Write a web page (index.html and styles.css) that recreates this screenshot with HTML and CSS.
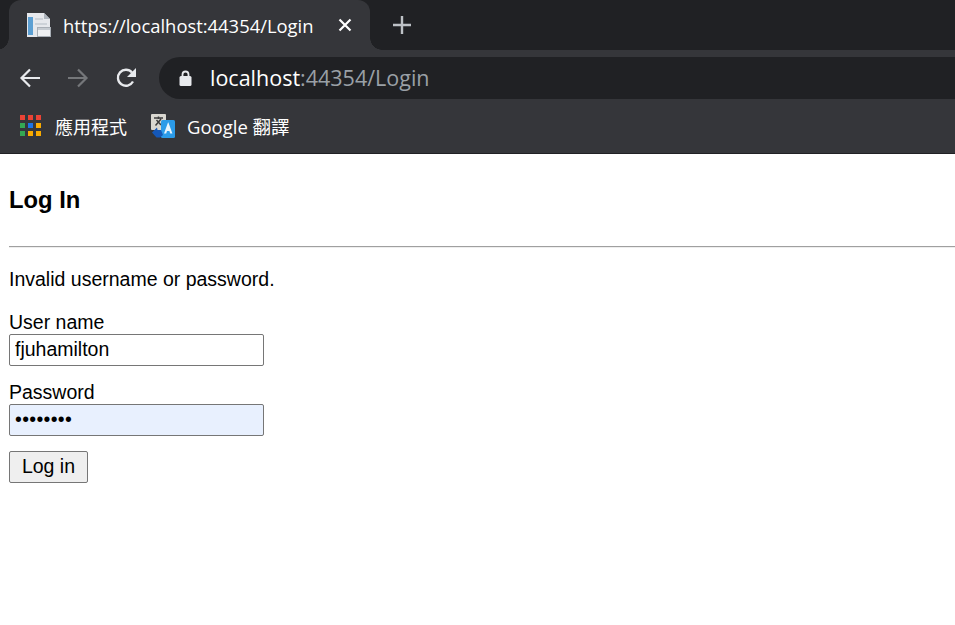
FILE: index.html
```html
<!DOCTYPE html>
<html lang="en">
<head>
  <meta charset="UTF-8">
  <title>Log In</title>
  <link rel="stylesheet" href="styles.css">
</head>
<body>

  <div class="browser">
    <div class="tabstrip">
      <div class="tab">
        <svg class="tab-icon" width="24" height="24" viewBox="0 0 24 24">
          <path d="M0 0h17l6 6v18H0z" fill="#e6e8ec"/>
          <path d="M17 0v6h6z" fill="#aeb5bd"/>
          <rect x="1" y="4" width="5" height="18" fill="#5c9fd2"/>
          <rect x="8" y="5" width="8" height="2" fill="#cdd2d8"/>
          <rect x="8" y="10" width="12" height="2" fill="#cdd2d8"/>
          <rect x="10.500" y="14.500" width="13" height="9" fill="#f0f1f3" stroke="#a9afb6"/>
          <rect x="11" y="15" width="12" height="2" fill="#c6cbd1"/>
        </svg>
        <span class="tab-title">https://localhost:44354/Login</span>
        <svg class="tab-close" width="14" height="14" viewBox="0 0 14 14">
          <path d="M1.500 1.500l11 11M12.500 1.500l-11 11" stroke="#fff" stroke-width="2.200"/>
        </svg>
      </div>
      <svg class="new-tab" width="18" height="18" viewBox="0 0 18 18">
        <path d="M9 0v18M0 9h18" stroke="#bdc1c6" stroke-width="2.400"/>
      </svg>
    </div>

    <div class="toolbar">
      <svg width="22" height="20" viewBox="0 0 22 20" class="nav-icon">
        <path d="M21 10H3M11 1.500L2.500 10l8.500 8.500" fill="none" stroke="#e8eaed" stroke-width="2.200"/>
      </svg>
      <svg width="22" height="20" viewBox="0 0 22 20" class="nav-icon">
        <path d="M1 10h18M11 1.500l8.500 8.500-8.500 8.500" fill="none" stroke="#75777a" stroke-width="2.200"/>
      </svg>
      <svg width="22" height="22" viewBox="0 0 22 22" class="nav-icon reload">
        <path d="M18 14.500A8 8 0 1 1 17 5.500" fill="none" stroke="#e8eaed" stroke-width="2.300"/>
        <path d="M21 1v9h-9z" fill="#e8eaed"/>
      </svg>
      <div class="omnibox">
        <svg width="13" height="16" viewBox="0 0 13 16" class="lock">
          <path d="M3.500 7V4.500a3 3 0 0 1 6 0V7" fill="none" stroke="#e8eaed" stroke-width="1.800"/>
          <rect x="0.500" y="6" width="12" height="10" rx="1.500" fill="#e8eaed"/>
        </svg>
        <span class="url"><span class="host">localhost</span>:44354/Login</span>
      </div>
    </div>

    <div class="bookmarks">
      <div class="bookmark">
        <div class="apps">
          <i class="red"></i><i class="red"></i><i class="red"></i>
          <i class="green"></i><i class="blue"></i><i class="amber"></i>
          <i class="green"></i><i class="amber"></i><i class="amber"></i>
        </div>
        <span class="apps-label">應用程式</span>
      </div>
      <div class="bookmark">
        <svg width="24" height="24" viewBox="0 0 24 24">
          <rect x="0" y="0" width="15" height="16" rx="1" fill="#d9d7d0"/>
          <path d="M3 4h9M7.500 2.500V5M4.500 11.500L10 5M5.500 6l4.500 5" stroke="#3c3c3c" stroke-width="1.500" fill="none"/>
          <rect x="10" y="6" width="14" height="18" rx="1.500" fill="#2b9be8"/>
          <path d="M17 8.500l-4 11h2.200l.8-2.600h2.400l.8 2.600h2.200l-4-11z" fill="#e8f4fc"/>
          <path d="M1 18.500l5-5 .5 2.500h3.500l2 5-3 2.500H5.500z" fill="#1558b8"/>
        </svg>
        <span>Google 翻譯</span>
      </div>
    </div>
  </div>

  <main class="page">
    <h3 class="title">Log In</h3>
    <hr class="rule">
    <p class="error">Invalid username or password.</p>
    <form class="login">
      <div class="field">
        <label for="user">User name</label>
        <input id="user" class="input" type="text" value="fjuhamilton">
      </div>
      <div class="field">
        <label for="pass">Password</label>
        <input id="pass" class="input filled" type="password" value="password">
      </div>
      <button class="submit" type="button">Log in</button>
    </form>
  </main>

</body>
</html>
```

FILE: styles.css
```css
html, body {
  margin: 0;
  padding: 0;
  background: #fff;
}
body {
  font-family: "Liberation Sans", Arial, sans-serif;
  font-size: 19.5px;
  color: #000;
  overflow: hidden;
}

/* browser chrome */
.browser {
  background: #35363a;
  border-bottom: 1px solid #202124;
  font-family: "Open Sans", "Noto Sans CJK TC", sans-serif;
  color: #e8eaed;
}
.tabstrip {
  height: 50px;
  background: #202124;
  display: flex;
  align-items: center;
  padding-left: 9px;
}
.tab {
  position: relative;
  width: 361px;
  height: 50px;
  box-sizing: border-box;
  background: #35363a;
  border-radius: 12px 12px 0 0;
  display: flex;
  align-items: center;
  padding: 0 18px;
}
/* curved flares where the tab meets the toolbar */
.tab::before,
.tab::after {
  content: "";
  position: absolute;
  bottom: 0;
  width: 12px;
  height: 12px;
}
.tab::before {
  left: -12px;
  background: radial-gradient(circle at 0 0, #202124 11.500px, #35363a 12px);
}
.tab::after {
  right: -12px;
  background: radial-gradient(circle at 100% 0, #202124 11.500px, #35363a 12px);
}
.tab-icon {
  flex: none;
}
.tab-title {
  margin-left: 12px;
  font-size: 18.400px;
  color: #fff;
  white-space: nowrap;
  flex: 1;
}
.new-tab {
  margin-left: 23px;
}
.toolbar {
  height: 56px;
  display: flex;
  align-items: center;
  padding-left: 19px;
}
.nav-icon {
  flex: none;
  margin-right: 26px;
}
.nav-icon.reload {
  margin-right: 22px;
}
.omnibox {
  flex: 1;
  height: 42px;
  background: #202124;
  border-radius: 21px 0 0 21px;
  display: flex;
  align-items: center;
  padding-left: 20px;
}
.lock {
  flex: none;
}
.url {
  margin: 0 0 2px 18px;
  font-size: 21.500px;
  color: #9aa0a6;
}
.host {
  color: #fff;
}
.bookmarks {
  height: 47px;
  box-sizing: border-box;
  padding: 0 0 8px 20px;
  display: flex;
  align-items: center;
}
.bookmark {
  display: flex;
  align-items: center;
  gap: 12px;
  font-size: 18.500px;
  color: #fff;
  margin-right: 24px;
}
.apps-label {
  margin-left: 2px;
  font-size: 18px;
}
.apps {
  display: grid;
  grid-template-columns: repeat(3, 5px);
  gap: 3px;
}
.apps i {
  width: 5px;
  height: 5px;
}
.red { background: #ea4335; }
.green { background: #34a853; }
.blue { background: #1a73e8; }
.amber { background: #f9ab00; }

/* login page */
.page {
  padding: 0 0 0 9px;
}
.title {
  margin: 0;
  padding-top: 32px;
  font-size: 23.800px;
  line-height: 27px;
  font-weight: bold;
}
.rule {
  margin: 33px 0 0;
  height: 0;
  border: 0;
  border-top: 1px solid #a0a0a0;
  border-bottom: 1px solid #eee;
}
.error {
  margin: 20px 0 0;
  line-height: 23px;
}
.login {
  margin-top: 20px;
}
.field {
  margin-bottom: 15px;
}
.field label {
  display: block;
  line-height: 23px;
}
.input {
  display: block;
  box-sizing: border-box;
  width: 255px;
  height: 32px;
  padding: 0 5px 2px;
  border: 1px solid #767676;
  border-radius: 2px;
  font: 19.500px "Liberation Sans", Arial, sans-serif;
  background: #fff;
  color: #000;
}
.filled {
  background: #e8f0fe;
  letter-spacing: 0.300px;
}
.submit {
  display: block;
  box-sizing: border-box;
  width: 79px;
  height: 32px;
  padding: 0 0 2px;
  border: 1px solid #767676;
  border-radius: 2px;
  background: #efefef;
  font: 19.500px "Liberation Sans", Arial, sans-serif;
  color: #000;
}
```
